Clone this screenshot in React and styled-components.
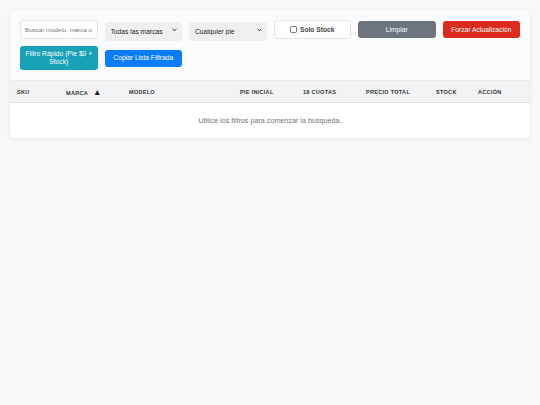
import styled, { createGlobalStyle } from "styled-components";

const GlobalStyle = createGlobalStyle`
    html, body {
        margin: 0;
        padding: 0;
        background: #f7f8fa;
        font-family: "Liberation Sans", Arial, sans-serif;
        color: #333;
    }
`;

const Page = styled.div`
    padding: 10px;
`;

const Card = styled.div`
    background: #fafbfc;
    border-radius: 5px;
    box-shadow: 0 1px 4px rgba(0, 0, 0, 0.08);
    overflow: hidden;
`;

const Filters = styled.div`
    display: grid;
    grid-template-columns: repeat(6, 1fr);
    gap: 7px;
    align-items: center;
    padding: 10px;
`;

const SearchInput = styled.input`
    box-sizing: border-box;
    height: 19px;
    width: 100%;
    padding: 0 4px;
    border: 1px solid #e3e5e8;
    border-radius: 3px;
    background: #fff;
    font: inherit;
    font-size: 6.7px;
    color: #333;
    outline: none;

    &::placeholder {
        color: #777;
        font-size: 6.2px;
    }
`;

const SelectWrap = styled.div`
    position: relative;
    height: 19px;
`;

const Select = styled.select`
    appearance: none;
    box-sizing: border-box;
    height: 19px;
    width: 100%;
    padding: 0 12px 0 6px;
    border: none;
    border-radius: 3px;
    background: #efefef;
    font: inherit;
    font-size: 6.7px;
    color: #222;
    outline: none;
`;

const Chevron = styled.svg`
    position: absolute;
    right: 5px;
    top: 8px;
    width: 5px;
    height: 4px;
    pointer-events: none;
`;

const CheckLabel = styled.label`
    box-sizing: border-box;
    height: 19px;
    display: flex;
    align-items: center;
    justify-content: center;
    gap: 3px;
    border: 1px solid #e3e5e8;
    border-radius: 3px;
    background: #fff;
    font-size: 6.7px;
    font-weight: 700;
    color: #444;

    input {
        appearance: none;
        box-sizing: border-box;
        width: 7px;
        height: 7px;
        margin: 0;
        border: 1px solid #777;
        border-radius: 1.5px;
        background: #fff;
    }
`;

const Button = styled.button`
    box-sizing: border-box;
    width: 100%;
    height: ${props => (props.tall ? "24px" : "17px")};
    padding: 0 5px;
    border: none;
    border-radius: 3px;
    background: ${props => props.bg};
    color: #fff;
    font: inherit;
    font-size: 6.7px;
    line-height: 8px;
    cursor: pointer;
`;

const Table = styled.table`
    width: 100%;
    border-collapse: collapse;
    table-layout: fixed;
    background: #fff;
`;

const Th = styled.th`
    height: 21px;
    padding: 0 0 0 7px;
    text-align: left;
    vertical-align: middle;
    background: #f1f3f5;
    border-top: 1px solid #e9ecef;
    border-bottom: 1px solid #dee2e6;
    font-size: 5.5px;
    font-weight: 700;
    letter-spacing: 0.3px;
    text-transform: uppercase;
    color: #333;
`;

const SortArrow = styled.span`
    margin-left: 5px;
    font-size: 8.5px;
    color: #222;
`;

const EmptyCell = styled.td`
    height: 35px;
    padding: 0;
    text-align: center;
    vertical-align: middle;
    font-size: 7.2px;
    color: #6c757d;
`;

const columns = [
    { label: "SKU", width: 49 },
    { label: "Marca", width: 63, sorted: true },
    { label: "Modelo", width: 111 },
    { label: "Pie Inicial", width: 63 },
    { label: "18 Cuotas", width: 63 },
    { label: "Precio Total", width: 70 },
    { label: "Stock", width: 42 },
    { label: "Acción", width: 59 },
];

function Dropdown({ label }) {
    return (
        <SelectWrap>
            <Select defaultValue="">
                <option value="">{label}</option>
            </Select>
            <Chevron viewBox="0 0 10 8">
                <path d="M1 1.5 L5 5.5 L9 1.5" fill="none" stroke="#222" strokeWidth="2" />
            </Chevron>
        </SelectWrap>
    );
}

export default function App() {
    return (
        <>
            <GlobalStyle />
            <Page>
                <Card>
                    <Filters>
                        <SearchInput placeholder="Buscar modelo, marca o SKU..." />
                        <Dropdown label="Todas las marcas" />
                        <Dropdown label="Cualquier pie" />
                        <CheckLabel>
                            <input type="checkbox" />
                            Solo Stock
                        </CheckLabel>
                        <Button bg="#6c757d">Limpiar</Button>
                        <Button bg="#dc2a1f">Forzar Actualización</Button>
                        <Button bg="#17a2b8" tall>Filtro Rápido (Pie $0 + Stock)</Button>
                        <Button bg="#0a7cff">Copiar Lista Filtrada</Button>
                    </Filters>
                    <Table>
                        <colgroup>
                            {columns.map(col => (
                                <col key={col.label} style={{ width: col.width }} />
                            ))}
                        </colgroup>
                        <thead>
                            <tr>
                                {columns.map(col => (
                                    <Th key={col.label}>
                                        {col.label}
                                        {col.sorted && <SortArrow>▲</SortArrow>}
                                    </Th>
                                ))}
                            </tr>
                        </thead>
                        <tbody>
                            <tr>
                                <EmptyCell colSpan={columns.length}>
                                    Utilice los filtros para comenzar la búsqueda.
                                </EmptyCell>
                            </tr>
                        </tbody>
                    </Table>
                </Card>
            </Page>
        </>
    );
}
